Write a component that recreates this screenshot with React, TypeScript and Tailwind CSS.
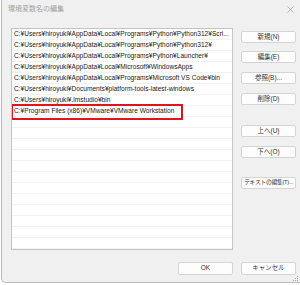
import React from "react";

const paths = [
  "C:¥Users¥hiroyuki¥AppData¥Local¥Programs¥Python¥Python312¥Scri...",
  "C:¥Users¥hiroyuki¥AppData¥Local¥Programs¥Python¥Python312¥",
  "C:¥Users¥hiroyuki¥AppData¥Local¥Programs¥Python¥Launcher¥",
  "C:¥Users¥hiroyuki¥AppData¥Local¥Microsoft¥WindowsApps",
  "C:¥Users¥hiroyuki¥AppData¥Local¥Programs¥Microsoft VS Code¥bin",
  "C:¥Users¥hiroyuki¥Documents¥platform-tools-latest-windows",
  "C:¥Users¥hiroyuki¥.lmstudio¥bin",
  "C:¥Program Files (x86)¥VMware¥VMware Workstation",
];

const font = { fontFamily: '"Liberation Sans", "Noto Sans CJK JP", sans-serif' };

// ボタン
const Btn = ({ label, className = "" }: { label: string; className?: string }) => (
  <div
    className={
      "h-[12px] w-[55px] flex items-center justify-center rounded-[2px] border border-[#d4d4d4] bg-[#fdfdfd] leading-none text-[#333] whitespace-nowrap overflow-hidden " +
      className
    }
  >
    {label}
  </div>
);

export default function App() {
  const rows = Array.from({ length: 20 }, (_, i) => paths[i] ?? "");

  return (
    <div className="w-[300px] h-[285px] bg-white overflow-hidden" style={font}>
      <div className="relative ml-[1px] w-[300px] h-[283px] bg-[#f0f0f0] border-l border-b border-[#b9b9b9] rounded-bl-[5px] flex flex-col">
        {/* タイトルバー */}
        <div className="h-[28px] flex items-start justify-between pl-[6px] pr-[6px] pt-[5px]">
          <span className="text-[7px] leading-[8px] text-[#a0a0a0]">環境変数名の編集</span>
          <svg width="7" height="7" viewBox="0 0 7 7" className="mt-[1px] mr-[1px]">
            <path d="M0.5 0.5 L6.5 6.5 M6.5 0.5 L0.5 6.5" stroke="#9a9a9a" strokeWidth="0.7" />
          </svg>
        </div>

        <div className="flex">
          {/* リスト */}
          <div className="ml-[9px] w-[222px] h-[222px] border border-[#c4c4c4] bg-white overflow-hidden">
            {rows.map((p, i) => (
              <div
                key={i}
                className="relative h-[11px] border-b border-[#f2f2f2] pl-[2px] text-[6.6px] leading-[10px] text-[#1a1a1a] whitespace-nowrap overflow-visible"
              >
                {p}
                {i === 7 && (
                  <div className="absolute left-[-1px] top-[-2px] w-[172px] h-[16px] border-2 border-[#e0141e]" />
                )}
              </div>
            ))}
          </div>

          {/* 右側のボタン */}
          <div className="ml-[8px] pt-[3px] flex flex-col text-[6.5px]">
            <Btn label="新規(N)" />
            <Btn label="編集(E)" className="mt-[8px]" />
            <Btn label="参照(B)..." className="mt-[9px]" />
            <Btn label="削除(D)" className="mt-[9px]" />
            <Btn label="上へ(U)" className="mt-[20px]" />
            <Btn label="下へ(O)" className="mt-[9px]" />
            <Btn label="テキストの編集(T)..." className="mt-[19px] text-[5.8px] tracking-[-0.3px]" />
          </div>
        </div>

        {/* 下部ボタン */}
        <div className="mt-[12px] flex pl-[176px] gap-[8px] text-[6.5px]">
          <Btn label="OK" className="h-[13px]" />
          <Btn label="キャンセル" className="h-[13px]" />
        </div>

        <svg width="5" height="5" viewBox="0 0 5 5" className="absolute right-[3px] bottom-[1px]">
          <rect x="4" y="0" width="1" height="1" fill="#a0a0a0" />
          <rect x="2" y="2" width="1" height="1" fill="#a0a0a0" />
          <rect x="4" y="2" width="1" height="1" fill="#a0a0a0" />
          <rect x="0" y="4" width="1" height="1" fill="#a0a0a0" />
          <rect x="2" y="4" width="1" height="1" fill="#a0a0a0" />
          <rect x="4" y="4" width="1" height="1" fill="#a0a0a0" />
        </svg>
      </div>
    </div>
  );
}
